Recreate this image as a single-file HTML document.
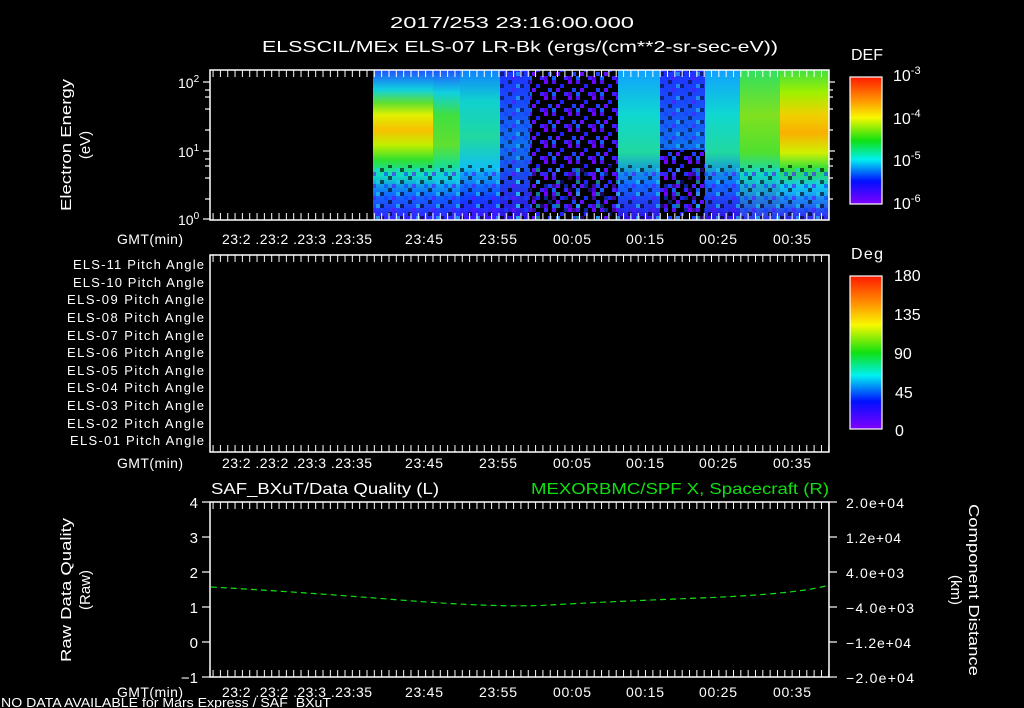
<!DOCTYPE html>
<html><head><meta charset="utf-8"><style>
html,body{margin:0;padding:0;background:#000;width:1024px;height:708px;overflow:hidden}
svg{display:block}
text{font-family:"Liberation Sans",sans-serif;fill:#fff}
</style></head><body>
<svg width="1024" height="708" viewBox="0 0 1024 708" xmlns="http://www.w3.org/2000/svg">
<defs>
<linearGradient id="cb" x1="0" y1="0" x2="0" y2="1">
<stop offset="0" stop-color="#ff1a00"/><stop offset="0.2" stop-color="#ffa000"/><stop offset="0.32" stop-color="#f8f800"/><stop offset="0.5" stop-color="#10e010"/><stop offset="0.65" stop-color="#00f0f0"/><stop offset="0.82" stop-color="#0010ff"/><stop offset="1" stop-color="#8000ff"/>
</linearGradient>
<linearGradient id="g1" x1="0" y1="0" x2="0" y2="1">
<stop offset="0" stop-color="#2050ff"/><stop offset="0.13" stop-color="#10d0e0"/><stop offset="0.22" stop-color="#60e030"/><stop offset="0.3" stop-color="#e0f000"/><stop offset="0.4" stop-color="#f8c000"/><stop offset="0.5" stop-color="#c0f000"/><stop offset="0.6" stop-color="#30e030"/><stop offset="0.7" stop-color="#10e0c0"/><stop offset="0.82" stop-color="#1070ff"/><stop offset="1" stop-color="#3020ff"/>
</linearGradient>
<linearGradient id="g1b" x1="0" y1="0" x2="0" y2="1">
<stop offset="0" stop-color="#2050ff"/><stop offset="0.15" stop-color="#10d0e0"/><stop offset="0.3" stop-color="#40e040"/><stop offset="0.5" stop-color="#60e030"/><stop offset="0.62" stop-color="#20e080"/><stop offset="0.72" stop-color="#10d0e0"/><stop offset="0.85" stop-color="#1060ff"/><stop offset="1" stop-color="#3020ff"/>
</linearGradient>
<linearGradient id="g2" x1="0" y1="0" x2="0" y2="1">
<stop offset="0" stop-color="#1080ff"/><stop offset="0.2" stop-color="#10d0d0"/><stop offset="0.45" stop-color="#20d8a0"/><stop offset="0.65" stop-color="#10c0f0"/><stop offset="0.85" stop-color="#1040ff"/><stop offset="1" stop-color="#4010ff"/>
</linearGradient>
<linearGradient id="g3" x1="0" y1="0" x2="0" y2="1">
<stop offset="0" stop-color="#2030ff"/><stop offset="0.5" stop-color="#1070f0"/><stop offset="1" stop-color="#3010e0"/>
</linearGradient>
<linearGradient id="g5" x1="0" y1="0" x2="0" y2="1">
<stop offset="0" stop-color="#10a0ff"/><stop offset="0.3" stop-color="#10d8d0"/><stop offset="0.55" stop-color="#20d8a0"/><stop offset="0.75" stop-color="#1070ff"/><stop offset="1" stop-color="#3010e0"/>
</linearGradient>
<linearGradient id="g8" x1="0" y1="0" x2="0" y2="1">
<stop offset="0" stop-color="#40e040"/><stop offset="0.15" stop-color="#a0f000"/><stop offset="0.3" stop-color="#f0d000"/><stop offset="0.42" stop-color="#f8b000"/><stop offset="0.55" stop-color="#d0f000"/><stop offset="0.66" stop-color="#30e040"/><stop offset="0.78" stop-color="#10c8f0"/><stop offset="1" stop-color="#3020f0"/>
</linearGradient>
<linearGradient id="g8b" x1="0" y1="0" x2="0" y2="1">
<stop offset="0" stop-color="#30e060"/><stop offset="0.3" stop-color="#80e020"/><stop offset="0.55" stop-color="#50e030"/><stop offset="0.7" stop-color="#10d8c0"/><stop offset="1" stop-color="#3030f0"/>
</linearGradient>
<pattern id="dark" width="24" height="16" patternUnits="userSpaceOnUse">
<rect width="24" height="16" fill="#000"/>
<rect x="0" y="0" width="4" height="4" fill="#5010f0"/><rect x="8" y="4" width="4" height="4" fill="#2020ff"/><rect x="16" y="0" width="4" height="4" fill="#7000ff"/><rect x="12" y="12" width="4" height="4" fill="#4020ff"/><rect x="4" y="8" width="4" height="4" fill="#6010ff"/><rect x="20" y="8" width="4" height="4" fill="#2040ff"/><rect x="16" y="12" width="4" height="4" fill="#5000e0"/><rect x="0" y="12" width="4" height="4" fill="#1060ff"/>
</pattern>
<pattern id="spk" width="20" height="12" patternUnits="userSpaceOnUse">
<rect x="0" y="0" width="4" height="4" fill="#000"/><rect x="12" y="4" width="4" height="4" fill="#6010ff"/><rect x="8" y="8" width="4" height="4" fill="#000"/><rect x="16" y="0" width="4" height="4" fill="#20d0f0"/><rect x="4" y="4" width="4" height="4" fill="#1040ff"/>
</pattern>
<pattern id="tx" width="7.33" height="8" patternUnits="userSpaceOnUse"><rect x="0" y="0" width="1" height="8" fill="#fff"/></pattern>
</defs>

<text x="512" y="28" font-size="16" text-anchor="middle" textLength="244" lengthAdjust="spacingAndGlyphs">2017/253 23:16:00.000</text>
<text x="262" y="52" font-size="16" textLength="516" lengthAdjust="spacingAndGlyphs">ELSSCIL/MEx ELS-07 LR-Bk  (ergs/(cm**2-sr-sec-eV))</text>

<!-- top panel spectrogram -->
<rect x="373" y="70" width="60" height="150" fill="url(#g1)"/>
<rect x="433" y="70" width="27" height="150" fill="url(#g1b)"/>
<rect x="460" y="70" width="40" height="150" fill="url(#g2)"/>
<rect x="500" y="70" width="30" height="150" fill="url(#g3)"/>
<rect x="530" y="70" width="88" height="150" fill="url(#dark)"/>
<rect x="618" y="70" width="42" height="150" fill="url(#g5)"/>
<rect x="660" y="70" width="45" height="150" fill="url(#g3)"/>
<rect x="660" y="150" width="45" height="70" fill="url(#dark)"/>
<rect x="705" y="70" width="35" height="150" fill="url(#g5)"/>
<rect x="740" y="70" width="40" height="150" fill="url(#g8b)"/>
<rect x="780" y="70" width="49" height="150" fill="url(#g8)"/>
<rect x="373" y="165" width="456" height="55" fill="url(#spk)" opacity="0.6"/>
<rect x="500" y="70" width="30" height="150" fill="url(#spk)" opacity="0.5"/>
<rect x="660" y="70" width="45" height="80" fill="url(#spk)" opacity="0.5"/>
<rect x="210" y="70" width="619" height="150" fill="none" stroke="#fff" stroke-width="1.5"/>
<rect x="210" y="70" width="619" height="7" fill="url(#tx)"/>
<rect x="210" y="213" width="619" height="7" fill="url(#tx)"/>
<g stroke="#fff" stroke-width="1.2">
<line x1="203" y1="82" x2="210" y2="82"/><line x1="203" y1="151" x2="210" y2="151"/><line x1="203" y1="219" x2="210" y2="219"/>
<line x1="205" y1="90" x2="210" y2="90"/><line x1="205" y1="97" x2="210" y2="97"/><line x1="205" y1="109" x2="210" y2="109"/><line x1="205" y1="130" x2="210" y2="130"/>
<line x1="205" y1="159" x2="210" y2="159"/><line x1="205" y1="166" x2="210" y2="166"/><line x1="205" y1="178" x2="210" y2="178"/><line x1="205" y1="199" x2="210" y2="199"/>
<line x1="829" y1="82" x2="835" y2="82"/><line x1="829" y1="151" x2="835" y2="151"/><line x1="829" y1="90" x2="833" y2="90"/><line x1="829" y1="97" x2="833" y2="97"/><line x1="829" y1="109" x2="833" y2="109"/><line x1="829" y1="130" x2="833" y2="130"/><line x1="829" y1="159" x2="833" y2="159"/><line x1="829" y1="166" x2="833" y2="166"/><line x1="829" y1="178" x2="833" y2="178"/><line x1="829" y1="199" x2="833" y2="199"/>
</g>
<text x="178" y="88" font-size="14">10<tspan font-size="10" dy="-6">2</tspan></text>
<text x="178" y="157" font-size="14">10<tspan font-size="10" dy="-6">1</tspan></text>
<text x="178" y="225" font-size="14">10<tspan font-size="10" dy="-6">0</tspan></text>
<text transform="translate(71,145) rotate(-90)" font-size="15" text-anchor="middle" textLength="132" lengthAdjust="spacingAndGlyphs">Electron Energy</text>
<text transform="translate(90,145) rotate(-90)" font-size="15" text-anchor="middle">(eV)</text>
<g font-size="14">
<text x="117" y="244" textLength="66">GMT(min)</text>
<text x="222" y="244" textLength="150">23:2 .23:2 .23:3 .23:35</text>
<text x="424" y="244" text-anchor="middle" textLength="38">23:45</text><text x="498" y="244" text-anchor="middle" textLength="38">23:55</text><text x="572" y="244" text-anchor="middle" textLength="38">00:05</text><text x="645" y="244" text-anchor="middle" textLength="38">00:15</text><text x="718" y="244" text-anchor="middle" textLength="38">00:25</text><text x="792" y="244" text-anchor="middle" textLength="38">00:35</text>
</g>
<!-- DEF colorbar -->
<text x="851" y="60" font-size="16" textLength="32">DEF</text>
<rect x="850" y="77" width="32" height="127" fill="url(#cb)" stroke="#fff" stroke-width="1.2"/>
<g font-size="16"><text x="893" y="81">10<tspan font-size="11" dy="-7">-3</tspan></text><text x="893" y="124">10<tspan font-size="11" dy="-7">-4</tspan></text><text x="893" y="166">10<tspan font-size="11" dy="-7">-5</tspan></text><text x="893" y="209">10<tspan font-size="11" dy="-7">-6</tspan></text></g>

<!-- middle panel -->
<rect x="210" y="255" width="619" height="197" fill="none" stroke="#fff" stroke-width="1.5"/>
<rect x="210" y="255" width="619" height="7" fill="url(#tx)"/>
<rect x="210" y="445" width="619" height="7" fill="url(#tx)"/>
<g font-size="13" text-anchor="end">
<text x="204" y="269" textLength="131">ELS-11 Pitch Angle</text><text x="204" y="287" textLength="131">ELS-10 Pitch Angle</text><text x="204" y="304" textLength="137">ELS-09 Pitch Angle</text><text x="204" y="322" textLength="137">ELS-08 Pitch Angle</text><text x="204" y="340" textLength="137">ELS-07 Pitch Angle</text><text x="204" y="357" textLength="137">ELS-06 Pitch Angle</text><text x="204" y="375" textLength="137">ELS-05 Pitch Angle</text><text x="204" y="392" textLength="137">ELS-04 Pitch Angle</text><text x="204" y="410" textLength="137">ELS-03 Pitch Angle</text><text x="204" y="428" textLength="137">ELS-02 Pitch Angle</text><text x="204" y="445" textLength="134">ELS-01 Pitch Angle</text>
</g>
<g font-size="14">
<text x="117" y="468" textLength="66">GMT(min)</text>
<text x="222" y="468" textLength="150">23:2 .23:2 .23:3 .23:35</text>
<text x="424" y="468" text-anchor="middle" textLength="38">23:45</text><text x="498" y="468" text-anchor="middle" textLength="38">23:55</text><text x="572" y="468" text-anchor="middle" textLength="38">00:05</text><text x="645" y="468" text-anchor="middle" textLength="38">00:15</text><text x="718" y="468" text-anchor="middle" textLength="38">00:25</text><text x="792" y="468" text-anchor="middle" textLength="38">00:35</text>
</g>
<text x="851" y="259" font-size="16" textLength="32">Deg</text>
<rect x="850" y="276" width="32" height="153" fill="url(#cb)" stroke="#fff" stroke-width="1.2"/>
<g font-size="16"><text x="894" y="281">180</text><text x="894" y="320">135</text><text x="894" y="359">90</text><text x="895" y="398">45</text><text x="895" y="436">0</text></g>

<!-- bottom panel -->
<text x="211" y="494" font-size="16" textLength="228" lengthAdjust="spacingAndGlyphs">SAF_BXuT/Data Quality (L)</text>
<text x="531" y="494" font-size="16" textLength="298" lengthAdjust="spacingAndGlyphs" style="fill:#10e010">MEXORBMC/SPF X, Spacecraft (R)</text>
<rect x="210" y="502" width="619" height="175" fill="none" stroke="#fff" stroke-width="1.5"/>
<rect x="210" y="502" width="619" height="7" fill="url(#tx)"/>
<rect x="210" y="670" width="619" height="7" fill="url(#tx)"/>
<g stroke="#fff" stroke-width="1.2">
<line x1="202" y1="502" x2="210" y2="502"/><line x1="202" y1="537" x2="210" y2="537"/><line x1="202" y1="572" x2="210" y2="572"/><line x1="202" y1="607" x2="210" y2="607"/><line x1="202" y1="642" x2="210" y2="642"/><line x1="202" y1="677" x2="210" y2="677"/>
<line x1="829" y1="502" x2="837" y2="502"/><line x1="829" y1="537" x2="837" y2="537"/><line x1="829" y1="572" x2="837" y2="572"/><line x1="829" y1="607" x2="837" y2="607"/><line x1="829" y1="642" x2="837" y2="642"/><line x1="829" y1="677" x2="837" y2="677"/>
</g>
<g font-size="15" text-anchor="end"><text x="198" y="508">4</text><text x="198" y="543">3</text><text x="198" y="578">2</text><text x="198" y="613">1</text><text x="198" y="648">0</text><text x="198" y="683">−1</text></g>
<g font-size="14"><text x="846" y="508" textLength="58">2.0e+04</text><text x="846" y="543" textLength="55">1.2e+04</text><text x="846" y="578" textLength="58">4.0e+03</text><text x="846" y="613" textLength="68">−4.0e+03</text><text x="846" y="648" textLength="65">−1.2e+04</text><text x="846" y="683" textLength="68">−2.0e+04</text></g>
<path d="M211,587 Q300,592 400,600 T550,605 T700,598 T829,585" fill="none" stroke="#10e010" stroke-width="1.2" stroke-dasharray="6,4"/>
<text transform="translate(71,590) rotate(-90)" font-size="15" text-anchor="middle" textLength="144" lengthAdjust="spacingAndGlyphs">Raw Data Quality</text>
<text transform="translate(90,590) rotate(-90)" font-size="15" text-anchor="middle">(Raw)</text>
<text transform="translate(969,590) rotate(90)" font-size="15" text-anchor="middle" textLength="172" lengthAdjust="spacingAndGlyphs">Component Distance</text>
<text transform="translate(951,590) rotate(90)" font-size="15" text-anchor="middle">(km)</text>
<g font-size="14">
<text x="117" y="697" textLength="66">GMT(min)</text>
<text x="222" y="697" textLength="150">23:2 .23:2 .23:3 .23:35</text>
<text x="424" y="697" text-anchor="middle" textLength="38">23:45</text><text x="498" y="697" text-anchor="middle" textLength="38">23:55</text><text x="572" y="697" text-anchor="middle" textLength="38">00:05</text><text x="645" y="697" text-anchor="middle" textLength="38">00:15</text><text x="718" y="697" text-anchor="middle" textLength="38">00:25</text><text x="792" y="697" text-anchor="middle" textLength="38">00:35</text>
</g>
<text x="1" y="707" font-size="13" textLength="330" lengthAdjust="spacingAndGlyphs">NO DATA AVAILABLE for Mars  Express / SAF_BXuT</text>
</svg>
</body></html>
